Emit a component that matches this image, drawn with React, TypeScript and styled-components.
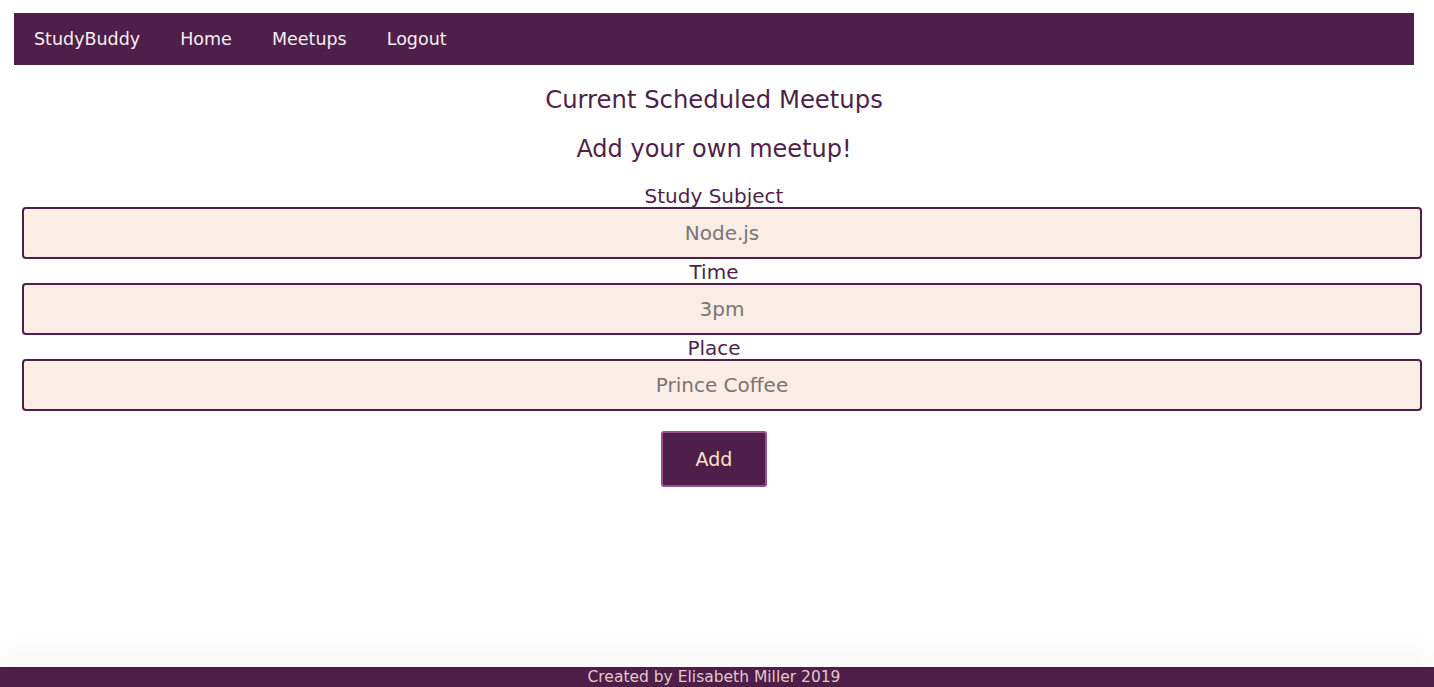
import React from 'react'
import styled, { createGlobalStyle } from 'styled-components'

const plum = '#4f1f4c'

const GlobalStyle = createGlobalStyle`
  html, body {
    margin: 0;
    padding: 0;
    background: #fff;
  }
  body {
    font-family: "DejaVu Sans", "Noto Sans", sans-serif;
  }
`

const Page = styled.div`
  min-height: 100vh;
  display: flex;
  flex-direction: column;
  box-sizing: border-box;
  padding-top: 13px;
`

const Nav = styled.nav`
  margin: 0 20px 0 14px;
  height: 52px;
  background: ${plum};
  display: flex;
  align-items: center;
  padding-left: 20px;
  gap: 40px;
`

const NavLink = styled.a`
  color: #f7eef0;
  font-size: 17.5px;
  line-height: 54px;
  text-decoration: none;
  cursor: pointer;
`

const Main = styled.main`
  flex: 1;
  display: flex;
  flex-direction: column;
  align-items: center;
  padding: 0 20px 0 14px;
`

const Title = styled.h2`
  margin: 20px 0 0;
  font-size: 24.3px;
  font-weight: 400;
  color: ${plum};
  line-height: 30px;
`

const SubTitle = styled(Title)`
  margin-top: 19px;
  font-size: 24px;
`

const Form = styled.form`
  width: 100%;
  display: flex;
  flex-direction: column;
  align-items: center;
  margin-top: 19px;
`

const Label = styled.label`
  font-size: 20px;
  color: ${plum};
  line-height: 24px;
  padding-top: 1px;
  margin-bottom: -1px;
`

const Input = styled.input`
  box-sizing: border-box;
  width: 100%;
  margin-left: 16px;
  height: 52px;
  border: 2px solid ${plum};
  border-radius: 4px;
  background: #faede6;
  text-align: center;
  font-family: inherit;
  font-size: 20px;
  color: #333;
  outline: none;
  &::placeholder {
    color: #7a7475;
  }
`

const Button = styled.button`
  margin-top: 20px;
  width: 106px;
  height: 56px;
  background: ${plum};
  border: 2px solid #9a4f8e;
  border-radius: 3px;
  color: #fbe1c6;
  font-family: inherit;
  font-size: 19px;
  cursor: pointer;
`

const Footer = styled.footer`
  height: 20px;
  background: #4d1e48;
  color: #e6c7cb;
  font-size: 15.5px;
  text-align: center;
  line-height: 20px;
  padding-right: 6px;
  box-shadow: 0 -14px 24px rgba(0, 0, 0, 0.04);
`

const fields = [
  { label: 'Study Subject', placeholder: 'Node.js' },
  { label: 'Time', placeholder: '3pm' },
  { label: 'Place', placeholder: 'Prince Coffee' },
]

export default function App() {
  return (
    <>
      <GlobalStyle />
      <Page>
        <Nav>
          <NavLink>StudyBuddy</NavLink>
          <NavLink>Home</NavLink>
          <NavLink>Meetups</NavLink>
          <NavLink>Logout</NavLink>
        </Nav>
        <Main>
          <Title>Current Scheduled Meetups</Title>
          <SubTitle>Add your own meetup!</SubTitle>
          <Form onSubmit={(e) => e.preventDefault()}>
            {fields.map((f) => (
              <React.Fragment key={f.label}>
                <Label>{f.label}</Label>
                <Input placeholder={f.placeholder} />
              </React.Fragment>
            ))}
            <Button type="submit">Add</Button>
          </Form>
        </Main>
        <Footer>Created by Elisabeth Miller 2019</Footer>
      </Page>
    </>
  )
}
